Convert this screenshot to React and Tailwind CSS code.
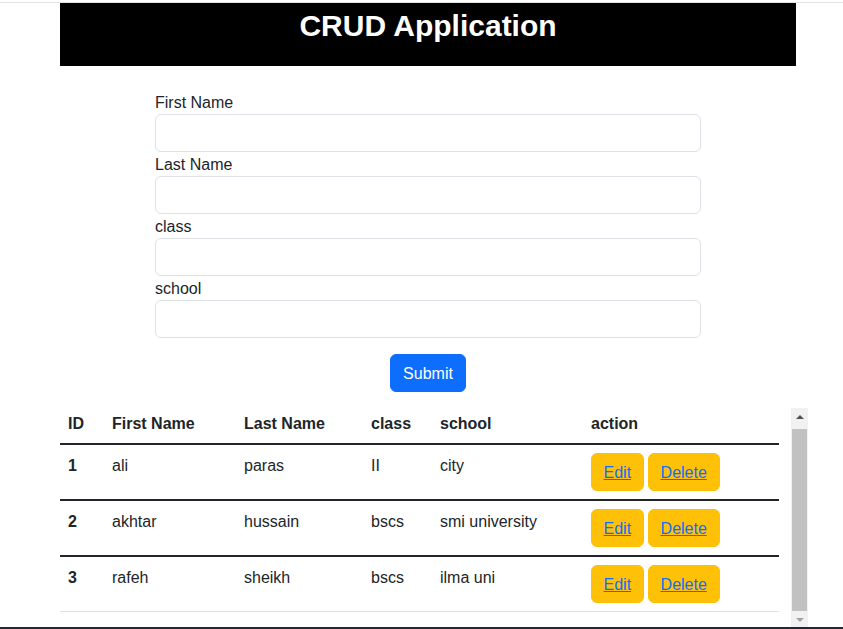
import React from 'react'

const rows = [
  { id: 1, first: 'ali', last: 'paras', cls: 'II', school: 'city' },
  { id: 2, first: 'akhtar', last: 'hussain', cls: 'bscs', school: 'smi university' },
  { id: 3, first: 'rafeh', last: 'sheikh', cls: 'bscs', school: 'ilma uni' },
]

const fields = ['First Name', 'Last Name', 'class', 'school']

function Field({ label }) {
  return (
    <div className="flex flex-col">
      <label className="h-6 pt-px leading-6 text-base text-[#212529]">{label}</label>
      <input
        type="text"
        className="h-[38px] w-full rounded-md border border-[#dee2e6] bg-white px-3 outline-none"
      />
    </div>
  )
}

function Scrollbar() {
  return (
    <div className="mt-[5px] flex h-[220px] w-[17px] flex-col bg-[#f1f1f1]">
      <div className="flex h-[17px] items-center justify-center">
        <div className="h-0 w-0 border-x-[4px] border-b-[4px] border-x-transparent border-b-[#505050]" />
      </div>
      <div className="mx-auto mt-[4px] w-[15px] flex-1 bg-[#c1c1c1]" />
      <div className="flex h-[17px] items-center justify-center">
        <div className="h-0 w-0 border-x-[4px] border-t-[4px] border-x-transparent border-t-[#a3a3a3]" />
      </div>
    </div>
  )
}

export default function App() {
  return (
    <div
      className="relative flex h-[629px] w-[843px] flex-col overflow-hidden bg-white text-[#212529]"
      style={{ fontFamily: '"Liberation Sans", Arial, sans-serif' }}
    >
      <div className="h-[2px]" />
      <div className="h-px bg-[#e3e3e3]" />

      {/* Header */}
      <div className="ml-[60px] flex h-[63px] w-[736px] justify-center bg-black">
        <h1 className="mt-[3px] text-[30px] font-bold leading-[40px] text-white">CRUD Application</h1>
      </div>

      {/* Form */}
      <div className="ml-[60px] w-[736px]">
        <form className="mx-auto mt-6 flex w-[546px] flex-col" onSubmit={(e) => e.preventDefault()}>
          {fields.map((f) => (
            <Field key={f} label={f} />
          ))}
          <div className="mt-4 flex justify-center">
            <button
              type="submit"
              className="h-[38px] rounded-md border border-[#0d6efd] bg-[#0d6efd] px-3 pt-px text-base text-white"
            >
              Submit
            </button>
          </div>
        </form>
      </div>

      {/* Table */}
      <div className="ml-[60px] mt-[11px] flex items-start">
        <table className="w-[719px] table-fixed border-collapse text-left text-base">
          <thead>
            <tr className="border-b-2 border-[#212529]">
              <th className="w-[44px] px-2 pt-[9px] pb-[7px] font-bold leading-6">ID</th>
              <th className="w-[132px] px-2 pt-[9px] pb-[7px] font-bold leading-6">First Name</th>
              <th className="w-[127px] px-2 pt-[9px] pb-[7px] font-bold leading-6">Last Name</th>
              <th className="w-[69px] px-2 pt-[9px] pb-[7px] font-bold leading-6">class</th>
              <th className="w-[151px] px-2 pt-[9px] pb-[7px] font-bold leading-6">school</th>
              <th className="px-2 pt-[9px] pb-[7px] font-bold leading-6">action</th>
            </tr>
          </thead>
          <tbody>
            {rows.map((r, i) => (
              <tr
                key={r.id}
                className={i < rows.length - 1 ? 'border-b-2 border-[#212529]' : 'border-b border-[#dee2e6]'}
              >
                <td className="px-2 pt-[9px] pb-2 align-top font-bold leading-6">{r.id}</td>
                <td className="px-2 pt-[9px] pb-2 align-top leading-6">{r.first}</td>
                <td className="px-2 pt-[9px] pb-2 align-top leading-6">{r.last}</td>
                <td className="px-2 pt-[9px] pb-2 align-top leading-6">{r.cls}</td>
                <td className="px-2 pt-[9px] pb-2 align-top leading-6">{r.school}</td>
                <td className="p-2 align-top">
                  <div className="flex gap-1">
                    <button className="h-[38px] rounded-md border border-[#ffc107] bg-[#ffc107] px-[11.5px] pt-px text-base text-[#0d6efd] underline">
                      Edit
                    </button>
                    <button className="h-[38px] rounded-md border border-[#ffc107] bg-[#ffc107] px-3 pt-px text-base text-[#0d6efd] underline">
                      Delete
                    </button>
                  </div>
                </td>
              </tr>
            ))}
          </tbody>
        </table>
        <div className="ml-[12px]">
          <Scrollbar />
        </div>
      </div>

      <div className="absolute bottom-0 left-0 h-[2px] w-full bg-[#1f2b33]" />
    </div>
  )
}
